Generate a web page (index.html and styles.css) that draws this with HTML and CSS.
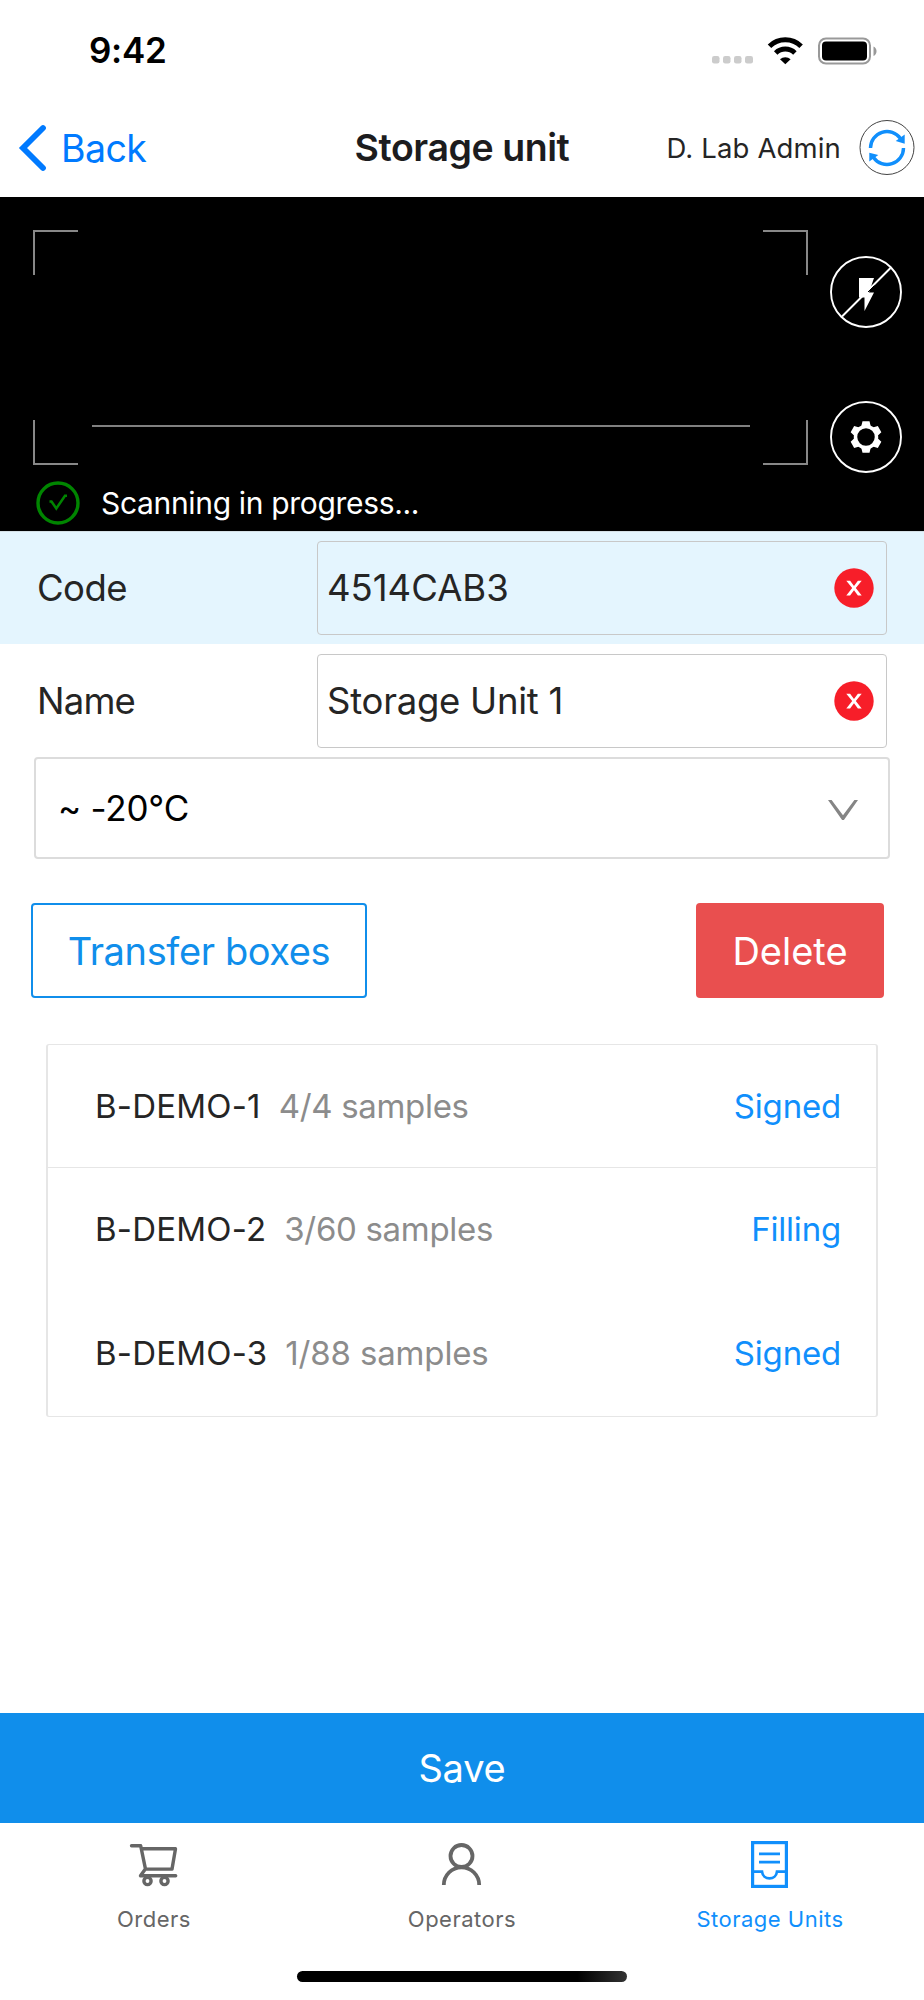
FILE: index.html
```html
<!DOCTYPE html>
<html lang="en">
<head>
<meta charset="utf-8">
<title>Storage unit</title>
<link rel="stylesheet" href="styles.css">
</head>
<body>
<div class="screen">
  <div class="status">
    <span class="time t">9:42</span>
    <svg class="status-icons" width="170" height="40" viewBox="0 0 170 40">
      <g fill="#ccc"><rect x="0" y="25" width="7.500" height="7.500" rx="2.200"/><rect x="11" y="25" width="7.500" height="7.500" rx="2.200"/><rect x="22" y="25" width="7.500" height="7.500" rx="2.200"/><rect x="33" y="25" width="8" height="7.500" rx="2.200"/></g>
      <g fill="none" stroke="#000" stroke-width="5"><path d="M57.500 15.200a22.600 22.600 0 0 1 31.600 0"/><path d="M63.700 22a13.800 13.800 0 0 1 19.200 0"/></g>
      <path d="M68 28.200a8 8 0 0 1 10.600 0L73.300 33.300z"/>
      <rect x="107" y="7.500" width="51" height="25" rx="7" fill="none" stroke="#999" stroke-width="2"/>
      <rect x="110" y="10.500" width="45" height="19" rx="4"/>
      <path d="M161.500 15.500c4 1.500 4 8 0 9.500z" fill="#999"/>
    </svg>
  </div>
  <div class="nav">
    <div class="back"><svg width="30" height="48" viewBox="0 0 30 48"><path d="M26 4L6 24L26 44" fill="none" stroke="#007aff" stroke-width="5.800" stroke-linecap="round"/></svg><span class="t back-label">Back</span></div>
    <div class="title"><span class="t">Storage unit</span></div>
    <div class="user"><span class="t user-name">D. Lab Admin</span>
      <svg width="56" height="56" viewBox="0 0 56 56"><circle cx="28" cy="27.500" r="27" fill="#fff" stroke="#444" stroke-width="1"/><g transform="translate(0 -.5)"><g fill="none" stroke="#108ffc" stroke-width="3.400"><path d="M11.500 28.500A16.500 16.500 0 0 1 41.500 19"/><path d="M44.500 28.500A16.500 16.500 0 0 1 14.500 38"/></g><path d="M45.700 15v9.200l-9-2.700z M10.300 42v-8.700l9 2.300z" fill="#108ffc"/></g></svg>
    </div>
  </div>
  <div class="scanner">
    <div class="view">
      <div class="frame"><i class="c tl"></i><i class="c tr"></i><i class="c bl"></i><i class="c br"></i><div class="beam"></div></div>
      <div class="progress"><svg width="44" height="44" viewBox="0 0 44 44" fill="none" stroke="#008500"><circle cx="22" cy="22" r="20" stroke-width="3.400"/><path d="M13.500 20.500h2l4.800 7L29 14.800h2" stroke-width="2.500"/></svg><span class="t">Scanning in progress...</span></div>
    </div>
    <div class="tools">
      <svg width="72" height="72" viewBox="0 0 72 72"><circle cx="36" cy="36" r="35" fill="none" stroke="#fff" stroke-width="1.900"/><path d="M12 60.500L60.500 12" stroke="#fff" stroke-width="1.900"/><path d="M29 22h15l-5 14.500h5L34.500 55V41.500H29z" fill="#fff"/><path d="M44.500 29.500L38 36" stroke="#000" stroke-width="1"/></svg>
      <svg width="72" height="72" viewBox="0 0 72 72"><circle cx="36" cy="36" r="35" fill="none" stroke="#fff" stroke-width="1.900"/><g fill="#fff"><g id="teeth"><path d="M32.500 20.300h7l1.500 6h-10zM32.500 51.700h7l1.500-6h-10z"/></g><use href="#teeth" transform="rotate(60 36 36)"/><use href="#teeth" transform="rotate(120 36 36)"/></g><circle cx="36" cy="36" r="10.500" fill="none" stroke="#fff" stroke-width="3.500"/></svg>
    </div>
  </div>
  <div class="field code"><label class="t">Code</label><div class="input"><span class="t value-code">4514CAB3</span><svg width="40" height="40" viewBox="0 0 40 40"><circle cx="20" cy="20" r="19.700" fill="#f71e29"/><path d="M12.300 12.700h3.800l3.900 5.200 3.900-5.200h3.800L21.800 20l5.900 7.500h-3.800L20 22.300l-3.900 5.200h-3.800L18.200 20z" fill="#fff"/></svg></div></div>
  <div class="field name"><label class="t">Name</label><div class="input"><span class="t">Storage Unit 1</span><svg width="40" height="40" viewBox="0 0 40 40"><circle cx="20" cy="20" r="19.700" fill="#f71e29"/><path d="M12.300 12.700h3.800l3.900 5.200 3.900-5.200h3.800L21.800 20l5.900 7.500h-3.800L20 22.300l-3.900 5.200h-3.800L18.200 20z" fill="#fff"/></svg></div></div>
  <div class="select"><span class="t">~ -20°C</span><svg width="30" height="24" viewBox="0 0 30 24"><path d="M0 3h3.600L15 18.200L26.400 3H30L15.900 23h-1.800z" fill="#858585"/></svg></div>
  <div class="actions"><div class="btn outline"><span class="t">Transfer boxes</span></div><div class="btn danger"><span class="t">Delete</span></div></div>
  <div class="list">
    <div class="row line"><span class="t id">B-DEMO-1</span><span class="t count">4/4 samples</span><span class="t state">Signed</span></div>
    <div class="row"><span class="t id">B-DEMO-2</span><span class="t count">3/60 samples</span><span class="t state">Filling</span></div>
    <div class="row"><span class="t id">B-DEMO-3</span><span class="t count last">1/88 samples</span><span class="t state">Signed</span></div>
  </div>
  <div class="save"><span class="t">Save</span></div>
  <div class="tabs">
    <div class="tab"><svg width="60" height="52" viewBox="0 0 60 52" fill="none" stroke="#666" stroke-width="3.400" stroke-linecap="round" stroke-linejoin="round"><path d="M7.500 9.800h9.200L21.500 33.100h26.500L51.500 12.800H17.500M21 33.500L16.500 39.800h35.200"/><circle cx="23.500" cy="45" r="3.600"/><circle cx="40.500" cy="45" r="3.600"/></svg><span class="t">Orders</span></div>
    <div class="tab"><svg width="60" height="52" viewBox="0 0 60 52" fill="none" stroke="#666" stroke-width="3.800"><circle cx="29.500" cy="20" r="11"/><path d="M11.800 49a17.700 17.700 0 0 1 35.400 0"/></svg><span class="t">Operators</span></div>
    <div class="tab on"><svg width="60" height="52" viewBox="0 0 60 52" fill="none" stroke="#108ffc" stroke-width="3.200"><rect x="12.600" y="6.600" width="33.800" height="43.800"/><path d="M19 17.800h21M19 26.200h21M12.600 35.700h9.400c1 9 14 9 15 0h9.400" stroke-width="2.700"/></svg><span class="t">Storage Units</span></div>
  </div>
  <div class="home"></div>
</div>
</body>
</html>
```
FILE: styles.css
```css
* { box-sizing: border-box; }
body { margin: 0; background: #fff; }
svg { display: block; flex: none; }
.screen { width: 924px; height: 2000px; display: flex; flex-direction: column; font-family: Inter, "Liberation Sans", sans-serif; color: #252525; overflow: hidden; }
.screen > * { flex: none; }
.t { white-space: pre; line-height: 1; }
.status { height: 100px; display: flex; align-items: center; justify-content: space-between; padding: 1px 42px 0 89px; }
.time { font-size: 35px; font-weight: 600; letter-spacing: -0.3px; color: #000; }
.nav { height: 97px; display: grid; grid-template-columns: 300px 1fr 300px; align-items: center; padding-bottom: 2px; }
.back { display: flex; align-items: center; gap: 14px; padding-left: 17px; font-size: 37.5px; letter-spacing: -0.6px; color: #007aff; }
.back-label, .user-name { padding-top: 2px; }
.title { text-align: center; font-size: 37.5px; font-weight: 600; letter-spacing: -0.45px; color: #1c1c1e; }
.user { display: flex; align-items: center; justify-content: flex-end; gap: 18px; padding-right: 9px; font-size: 27.5px; letter-spacing: 0.15px; }
.scanner { height: 334px; background: #000; display: flex; justify-content: space-between; }
.view { padding: 33px 0 0 33px; }
.frame { width: 775px; height: 235px; position: relative; }
.c { position: absolute; width: 45px; height: 45px; border: 0 solid #888; }
.tl { left: 0; top: 0; border-width: 2px 0 0 2px; }
.tr { right: 0; top: 0; border-width: 2px 2px 0 0; }
.bl { left: 0; bottom: 0; border-width: 0 0 2px 2px; }
.br { right: 0; bottom: 0; border-width: 0 2px 2px 0; }
.beam { position: absolute; left: 59px; right: 58px; top: 195px; height: 2px; background: #808080; }
.progress { display: flex; align-items: center; gap: 21px; padding: 16px 0 0 3px; font-size: 30px; letter-spacing: -0.33px; color: #fff; }
.tools { display: flex; flex-direction: column; gap: 73px; padding: 59px 22px 0 0; }
.field { height: 113px; display: flex; align-items: center; padding: 0 37px; font-size: 36.5px; letter-spacing: -0.55px; }
.field label { width: 280px; }
.name { letter-spacing: -0.25px; }
.name label { letter-spacing: -0.8px; }
.name .t { padding-top: 2px; }
.code { background: #e4f5fe; border-top: 1px solid #d4e0e6; }
.value-code { letter-spacing: 0; }
.input { flex: 1; height: 94px; border: 1px solid #c8c8c8; border-radius: 4px; display: flex; align-items: center; justify-content: space-between; padding: 0 12px 0 9px; }
.select { margin: 0 34px; height: 102px; width: 856px; border: 2px solid #dcdcdc; border-radius: 4px; display: flex; align-items: center; justify-content: space-between; padding: 1px 30px 0 22px; font-size: 35px; letter-spacing: -0.2px; color: #000; }
.actions { display: flex; justify-content: space-between; padding: 44px 40px 0 31px; }
.btn { height: 95px; display: flex; align-items: center; justify-content: center; border-radius: 4px; font-size: 38px; }
.outline { width: 336px; border: 2px solid #108eeb; color: #108eeb; letter-spacing: -0.38px; }
.danger { width: 188px; background: #e94f4f; color: #fff; }
.list { margin: 46px 46px 0; height: 373px; width: 832px; border: 1px solid #e6e6e6; border-left-width: 2px; border-right-width: 2px; border-radius: 3px; }
.row { height: 123.5px; display: flex; align-items: center; padding: 0 35px 0 47px; font-size: 33px; }
.line { height: 123px; border-bottom: 1px solid #e6e6e6; }
.id { letter-spacing: 0.2px; }
.count { margin-left: 18px; letter-spacing: -0.32px; color: #8c8c8c; }
.last { letter-spacing: -0.15px; }
.state { margin-left: auto; letter-spacing: -0.2px; color: #108ffc; }
.save { height: 110px; margin-top: auto; background: #108eeb; color: #fff; font-size: 38px; letter-spacing: -0.2px; display: flex; align-items: center; justify-content: center; }
.tabs { height: 148px; display: flex; }
.tab { flex: 1; display: flex; flex-direction: column; align-items: center; padding-top: 13px; gap: 20px; font-size: 22px; letter-spacing: 0.5px; color: #666; }
.tab.on { color: #108ffc; }
.home { width: 330px; height: 11px; margin: 0 auto 18px 297px; border-radius: 6px; background: linear-gradient(90deg, #000 85%, #333); }
```
